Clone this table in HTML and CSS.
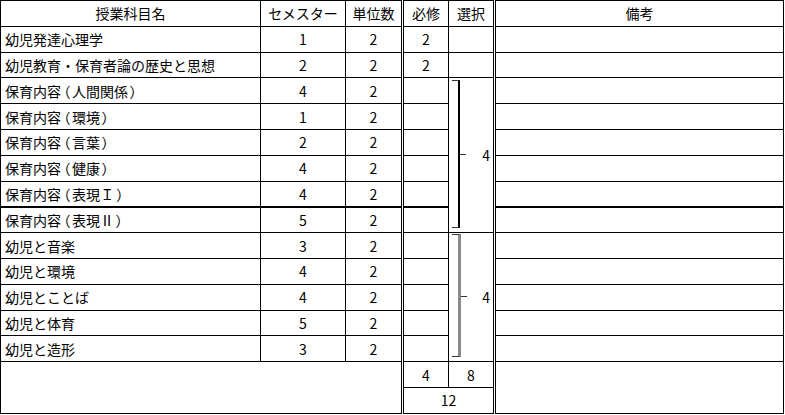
FILE: index.html
```html
<!DOCTYPE html>
<html lang="ja">
<head>
<meta charset="utf-8">
<link rel="stylesheet" href="styles.css">
</head>
<body>
<table class="grid">
  <colgroup>
    <col class="c-name"><col class="c-sem"><col class="c-unit"><col class="c-req"><col class="c-sel"><col class="c-note">
  </colgroup>
  <tr>
    <td class="center">授業科目名</td>
    <td class="center">セメスター</td>
    <td class="center">単位数</td>
    <td class="center dl">必修</td>
    <td class="center">選択</td>
    <td class="center dl">備考</td>
  </tr>
  <tr>
    <td>幼児発達心理学</td><td class="center">1</td><td class="center">2</td>
    <td class="center dl">2</td><td></td><td class="dl"></td>
  </tr>
  <tr>
    <td>幼児教育・保育者論の歴史と思想</td><td class="center">2</td><td class="center">2</td>
    <td class="center dl">2</td><td></td><td class="dl"></td>
  </tr>
  <tr>
    <td>保育内容<span class="pp">（</span>人間関係<span class="pp">）</span></td><td class="center">4</td><td class="center">2</td>
    <td class="dl"></td>
    <td class="group" rowspan="6"><div class="brace"><span class="brace-tick"></span></div>4</td>
    <td class="dl"></td>
  </tr>
  <tr>
    <td>保育内容<span class="pp">（</span>環境<span class="pp">）</span></td><td class="center">1</td><td class="center">2</td>
    <td class="dl"></td><td class="dl"></td>
  </tr>
  <tr>
    <td>保育内容<span class="pp">（</span>言葉<span class="pp">）</span></td><td class="center">2</td><td class="center">2</td>
    <td class="dl"></td><td class="dl"></td>
  </tr>
  <tr>
    <td>保育内容<span class="pp">（</span>健康<span class="pp">）</span></td><td class="center">4</td><td class="center">2</td>
    <td class="dl"></td><td class="dl"></td>
  </tr>
  <tr class="thick">
    <td>保育内容<span class="pp">（</span>表現<span class="pp">Ｉ</span><span class="pp">）</span></td><td class="center">4</td><td class="center">2</td>
    <td class="dl"></td><td class="dl"></td>
  </tr>
  <tr>
    <td>保育内容<span class="pp">（</span>表現Ⅱ<span class="pp">）</span></td><td class="center">5</td><td class="center">2</td>
    <td class="dl"></td><td class="dl"></td>
  </tr>
  <tr>
    <td>幼児と音楽</td><td class="center">3</td><td class="center">2</td>
    <td class="dl"></td>
    <td class="group" rowspan="5"><div class="brace brace-grey"><span class="brace-tick"></span></div>4</td>
    <td class="dl"></td>
  </tr>
  <tr>
    <td>幼児と環境</td><td class="center">4</td><td class="center">2</td>
    <td class="dl"></td><td class="dl"></td>
  </tr>
  <tr>
    <td>幼児とことば</td><td class="center">4</td><td class="center">2</td>
    <td class="dl"></td><td class="dl"></td>
  </tr>
  <tr>
    <td>幼児と体育</td><td class="center">5</td><td class="center">2</td>
    <td class="dl"></td><td class="dl"></td>
  </tr>
  <tr>
    <td>幼児と造形</td><td class="center">3</td><td class="center">2</td>
    <td class="dl"></td><td class="dl"></td>
  </tr>
  <tr>
    <td colspan="3" rowspan="2"></td>
    <td class="center dl">4</td>
    <td class="center">8</td>
    <td class="dl" rowspan="2"></td>
  </tr>
  <tr>
    <td class="center dl" colspan="2">12</td>
  </tr>
</table>
</body>
</html>
```

FILE: styles.css
```css
html, body {
  margin: 0;
  padding: 0;
  background: #fff;
}

body {
  font-family: "Noto Sans CJK JP", "Noto Sans", sans-serif;
  font-size: 14px;
  color: #000;
}

.grid {
  border-collapse: collapse;
  table-layout: fixed;
  width: 783px;
}

.c-name { width: 260px; }
.c-sem { width: 85px; }
.c-unit { width: 57px; }
.c-req { width: 46px; }
.c-sel { width: 46px; }
.c-note { width: 289px; }

.grid tr {
  height: 25.8px;
}

.grid td {
  border: 1px solid #000;
  padding: 0 4px;
  line-height: 16px;
  vertical-align: middle;
  white-space: nowrap;
  overflow: hidden;
}

.pp {
  font-feature-settings: "palt";
  margin: 0 2px;
}

.grid td.center {
  text-align: center;
  padding: 0;
}

.grid td.dl {
  border-left: 3px double #000;
}

.grid tr.thick td {
  border-bottom: 2px solid #000;
}

.grid td.group {
  position: relative;
  text-align: right;
  padding: 0 3px 0 0;
}

.brace {
  position: absolute;
  left: 3px;
  top: 2px;
  bottom: 4px;
  width: 6px;
  border-top: 1px solid #333;
  border-bottom: 1px solid #333;
  border-right: 2px solid #000;
}

.brace-grey {
  top: 1px;
  bottom: 4px;
  width: 6px;
  border-right: 3px solid #8a8a8a;
}

.brace-tick {
  position: absolute;
  left: 100%;
  top: 50%;
  margin-left: 2px;
  width: 6px;
  height: 1px;
  background: #333;
}

.brace-grey .brace-tick {
  margin-left: 3px;
}
```
